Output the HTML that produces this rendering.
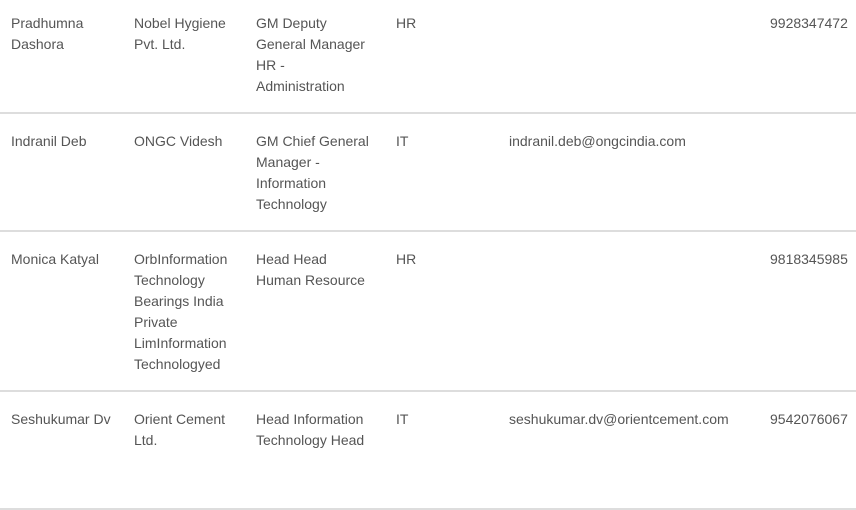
<!DOCTYPE html>
<html><head><style>
body{margin:0;width:856px;height:463px;overflow:hidden;background:#fff;font-family:"Liberation Sans",sans-serif;font-size:14px;line-height:21px;color:#555;}
.row{position:relative;padding:17px 0 15px;border-bottom:2px solid #ddd;}
.c{position:absolute;top:17px;}
.wrap{position:absolute;top:-4px;left:0;width:856px;}
</style></head><body>
<div class="wrap">
<div class="row" style="height:84px">
<div class="c" style="left:11px;width:110px">Pradhumna<br>Dashora</div>
<div class="c" style="left:134px;width:115px">Nobel Hygiene<br>Pvt. Ltd.</div>
<div class="c" style="left:256px;width:125px">GM Deputy<br>General Manager<br>HR -<br>Administration</div>
<div class="c" style="left:396px">HR</div>
<div class="c" style="left:770px">9928347472</div>
</div>
<div class="row" style="height:84px">
<div class="c" style="left:11px">Indranil Deb</div>
<div class="c" style="left:134px">ONGC Videsh</div>
<div class="c" style="left:256px">GM Chief General<br>Manager -<br>Information<br>Technology</div>
<div class="c" style="left:396px">IT</div>
<div class="c" style="left:509px">indranil.deb@ongcindia.com</div>
</div>
<div class="row" style="height:126px">
<div class="c" style="left:11px">Monica Katyal</div>
<div class="c" style="left:134px">OrbInformation<br>Technology<br>Bearings India<br>Private<br>LimInformation<br>Technologyed</div>
<div class="c" style="left:256px">Head Head<br>Human Resource</div>
<div class="c" style="left:396px">HR</div>
<div class="c" style="left:770px">9818345985</div>
</div>
<div class="row" style="height:84px">
<div class="c" style="left:11px">Seshukumar Dv</div>
<div class="c" style="left:134px">Orient Cement<br>Ltd.</div>
<div class="c" style="left:256px">Head Information<br>Technology Head</div>
<div class="c" style="left:396px">IT</div>
<div class="c" style="left:509px">seshukumar.dv@orientcement.com</div>
<div class="c" style="left:770px">9542076067</div>
</div>
</div>
</body></html>
